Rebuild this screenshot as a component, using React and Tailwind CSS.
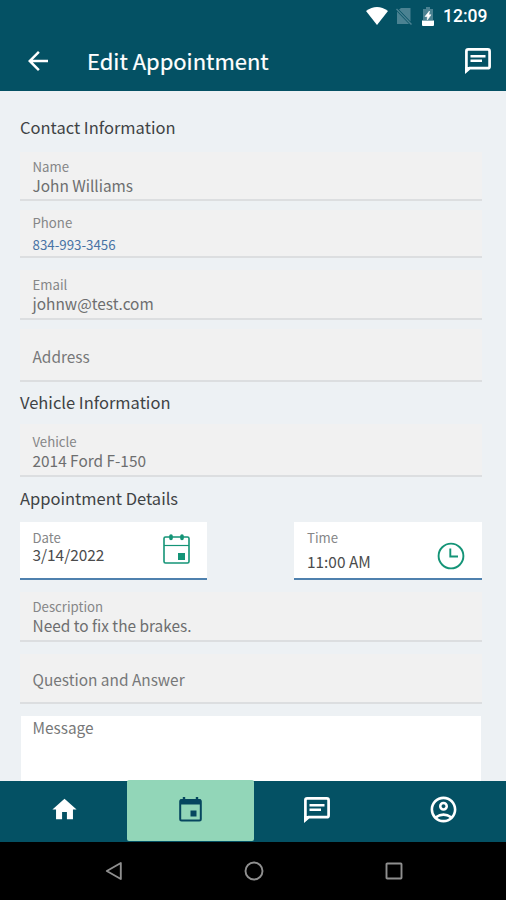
import React from "react";
import { MdArrowBack, MdHome, MdOutlineAccountCircle } from "react-icons/md";

function ChatIcon({ className }) {
  return (
    <svg viewBox="0 0 26 26" fill="none" stroke="currentColor" className={className}>
      <path d="M1.4 23V3.2Q1.4 1.4 3.2 1.4H22.8Q24.6 1.4 24.6 3.2V18.4Q24.6 20.2 22.8 20.2H4.6Z" strokeWidth="2.7" />
      <path d="M0.1 19H6.5L0.1 25.5Z" fill="currentColor" stroke="none" />
      <path d="M5.5 8.3H20.5M5.5 12.8H17" strokeWidth="2.5" />
    </svg>
  );
}

function StatusIcons() {
  return (
    <>
      <svg viewBox="0 0 22 18" className="w-[22px] h-[18px]" fill="white">
        <path d="M0 4Q11 -4 22 4L11 18Z" />
      </svg>
      <svg viewBox="0 0 16 18" className="ml-2 w-4 h-[18px]" fill="none">
        <path d="M5 1H14.5V14.5L3 2.5ZM1 4.5V17H13Z" fill="#4b8292" />
        <path d="M0.5 2L15.5 17.5" stroke="#4b8292" strokeWidth="1.5" />
      </svg>
      <svg viewBox="0 0 12 19" className="ml-[10px] w-3 h-[19px]">
        <path d="M4 0H8V2H11V13H1V2H4Z" fill="#4b8292" />
        <path d="M0 13.5H12V18Q12 19 11 19H1Q0 19 0 18Z" fill="white" />
        <path d="M7.5 4L3 9.5H5.3V13L9 7.8H6.8Z" fill="white" stroke="white" strokeWidth="0.6" />
      </svg>
    </>
  );
}

function Heading({ children, className }) {
  return <h2 className={`text-[16.5px] leading-5 text-[#3f4345] ${className}`}>{children}</h2>;
}

function Field({ label, value, className, valueClass = "text-[15.4px] text-[#6d6e6f]" }) {
  return (
    <div className={`border-b-2 border-[#dcdee0] bg-[#f1f1f1] pl-[12.5px] ${className}`}>
      <div className="text-[13.2px] leading-[19px] text-[#858687]">{label}</div>
      <div className={`leading-[19px] ${valueClass}`}>{value}</div>
    </div>
  );
}

export default function App() {
  return (
    <div className="flex h-[900px] w-[506px] flex-col overflow-hidden whitespace-nowrap bg-[#edf1f4] font-['Noto_Sans_CJK_SC',sans-serif]">
      <header className="h-[91px] shrink-0 bg-[#045164] text-white">
        <div className="flex h-8 items-center pl-[366px]">
          <StatusIcons />
          <span className="ml-[9px] font-['Roboto',sans-serif] text-[17.5px] font-medium leading-5">12:09</span>
        </div>
        <div className="flex h-[58px] items-center pl-[23px]">
          <MdArrowBack className="size-[30px]" />
          <h1 className="-mt-[3px] ml-[34px] flex-1 text-[22px] leading-7 [-webkit-text-stroke:0.2px_white]">Edit Appointment</h1>
          <ChatIcon className="mr-[15px] size-[26px]" />
        </div>
      </header>

      <main className="h-[690px] shrink-0 overflow-hidden px-5 pr-6">
        <Heading className="mt-[26px]">Contact Information</Heading>
        <Field label="Name" value="John Williams" className="mt-[15px] h-[49px] pt-[5px]" />
        <Field
          label="Phone"
          value="834-993-3456"
          className="mt-[9px] h-[48px] pt-[3px]"
          valueClass="mt-[3px] text-[13.3px] text-[#4873a5]"
        />
        <Field label="Email" value="johnw@test.com" className="mt-[12px] h-[50px] pt-[5px]" />
        <div className="mt-[9px] h-[53px] border-b-2 border-[#dcdee0] bg-[#f1f1f1] pl-[12.5px] pt-[18px] text-[15.4px] leading-[19px] text-[#777879]">Address</div>

        <Heading className="mt-[10px]">Vehicle Information</Heading>
        <Field label="Vehicle" value="2014 Ford F-150" className="mt-[12px] h-[53px] pt-[8px]" />

        <Heading className="mt-[11px]">Appointment Details</Heading>
        <div className="mt-[14px] flex justify-between">
          <div className="flex h-[58px] w-[187px] justify-between border-b-2 border-[#4f81ae] bg-white pl-[12.5px] pr-[17px] pt-[7px]">
            <div>
              <div className="text-[13.2px] leading-[18px] text-[#858687]">Date</div>
              <div className="-mt-px text-[15.4px] leading-[16px] text-[#4a4b4c]">3/14/2022</div>
            </div>
            <svg viewBox="0 0 27 30" className="mt-[5px] h-[30px] w-[27px] text-[#149477]" fill="none" stroke="currentColor">
              <rect x="1" y="3" width="25" height="26" rx="1.5" strokeWidth="1.6" />
              <path d="M1 11.5H26" strokeWidth="1.2" />
              <path d="M8 2V4.4M19 2V4.4" strokeWidth="3.6" strokeLinecap="round" />
              <rect x="15" y="19" width="7" height="7" fill="currentColor" stroke="none" />
            </svg>
          </div>
          <div className="flex h-[58px] w-[188px] justify-between border-b-2 border-[#4f81ae] bg-white pl-[13px] pr-[17px] pt-[7px]">
            <div>
              <div className="text-[13.2px] leading-[18px] text-[#858687]">Time</div>
              <div className="mt-[5px] text-[15.4px] leading-[19px] text-[#4a4b4c]">11:00 AM</div>
            </div>
            <svg viewBox="0 0 28 28" className="mt-[13px] size-[28px] text-[#149477]" fill="none" stroke="currentColor">
              <circle cx="14" cy="14" r="12.4" strokeWidth="1.9" />
              <path d="M13.3 6.5V14.5H21" strokeWidth="1.9" />
            </svg>
          </div>
        </div>
        <Field label="Description" value="Need to fix the brakes." className="mt-3 h-[50px] pt-[5px]" />
        <div className="mt-3 h-[50px] border-b-2 border-[#dcdee0] bg-[#f1f1f1] pl-[12.5px] pt-[16px] text-[15.4px] leading-[19px] text-[#777879]">Question and Answer</div>
        <div className="ml-px mr-px mt-3 h-[70px] bg-white pl-[11.5px] pt-[2px] text-[15.4px] leading-[19px] text-[#777879]">Message</div>
      </main>

      <nav className="flex h-[61px] shrink-0 bg-[#045164] text-white">
        <div className="flex w-[127px] items-center justify-center pb-[4px] pl-px">
          <MdHome className="size-[29px]" />
        </div>
        <div className="-mt-px flex h-[61px] w-[127px] items-center justify-center rounded-xs bg-[#92d6b8] pb-[4px] text-[#06465f]">
          <svg viewBox="0 0 23 26" className="h-[26px] w-[23px]" fill="none" stroke="currentColor">
            <rect x="1.2" y="4" width="20.6" height="20.4" rx="1.5" strokeWidth="2" />
            <path d="M1 6H22" strokeWidth="5" />
            <path d="M5 1V4M18 1V4" strokeWidth="2.4" />
            <rect x="11.5" y="14.5" width="6" height="6" fill="currentColor" stroke="none" />
          </svg>
        </div>
        <div className="flex w-[126px] items-center justify-center pb-[4px]">
          <ChatIcon className="size-[26px]" />
        </div>
        <div className="flex w-[126px] items-center justify-center pb-[4px] pl-px">
          <MdOutlineAccountCircle className="size-[31px]" />
        </div>
      </nav>

      <footer className="flex flex-1 items-center bg-black pl-[105px] text-[#8f8f8f]">
        <svg viewBox="0 0 17 20" className="h-5 w-[17px]" fill="none" stroke="currentColor" strokeWidth="1.9">
          <path d="M15.8 2V18L1.8 10Z" strokeLinejoin="round" />
        </svg>
        <svg viewBox="0 0 20 20" className="ml-[122px] size-5" fill="none" stroke="currentColor" strokeWidth="1.9">
          <circle cx="10" cy="10" r="8.5" />
        </svg>
        <svg viewBox="0 0 18 18" className="ml-[121px] size-[18px]" fill="none" stroke="currentColor" strokeWidth="1.9">
          <rect x="1.5" y="1.5" width="15" height="15" rx="0.7" />
        </svg>
      </footer>
    </div>
  );
}
